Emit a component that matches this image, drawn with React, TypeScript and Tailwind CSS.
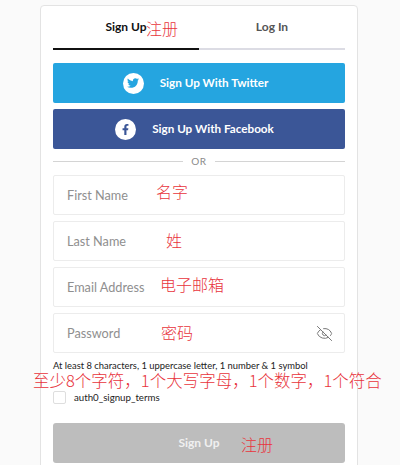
import React from "react";
import { EyeOff } from "lucide-react";
import { FaTwitter, FaFacebookF } from "react-icons/fa";

const cjk = "font-['Noto_Sans_CJK_SC',sans-serif] font-light text-[#e8343c]";

const Field = ({ label, note, noteClass, children }: { label: string; note: string; noteClass: string; children?: React.ReactNode }) => (
  <div className="relative flex h-10 items-center rounded-[2px] border border-[#ececec] bg-white pl-[13px] pt-[2px] text-[12.7px] text-[#8f8f8f]">
    {label}
    <span className={`absolute text-[16px] leading-6 ${cjk} ${noteClass}`}>{note}</span>
    {children}
  </div>
);

const App = () => {
  return (
    <div className="h-[465px] w-[400px] overflow-hidden bg-[#fafafa] pl-[40px] pt-[5px] font-['Lato',sans-serif]">
      <div className="h-[470px] w-[318px] rounded-t-[4px] border border-[#e3e3e3] bg-white px-[12px]">
        <div className="flex h-[44px]">
          <div className="relative flex w-[146px] items-center justify-center border-b-2 border-[#111] text-[12px] font-bold text-[#111]">
            Sign Up
            <span className={`absolute left-[93px] top-[12px] text-[16px] leading-5 ${cjk}`}>注册</span>
          </div>
          <div className="flex flex-1 items-center justify-center border-b-2 border-[#dcdce4] text-[12px] font-bold text-[#555]">
            Log In
          </div>
        </div>

        <button className="mt-[13px] flex h-10 w-full items-center justify-center gap-[16px] rounded-[2px] bg-[#25a5e0] pr-[7px] text-[11.7px] font-bold text-white">
          <span className="flex h-[21px] w-[21px] items-center justify-center rounded-full bg-white text-[#25a5e0]">
            <FaTwitter size={12} />
          </span>
          Sign Up With Twitter
        </button>
        <button className="mt-[6px] flex h-10 w-full items-center justify-center gap-[16px] rounded-[2px] bg-[#3b5697] pr-[9px] text-[11.7px] font-bold text-white">
          <span className="flex h-[21px] w-[21px] items-center justify-center rounded-full bg-white text-[#3b5697]">
            <FaFacebookF size={11} />
          </span>
          Sign Up With Facebook
        </button>

        <div className="mt-[5px] flex h-[14px] items-center gap-[8px] text-[10px] tracking-[0.5px] text-[#8a8a8a]">
          <div className="h-px flex-1 bg-[#d4d4d4]" />
          OR
          <div className="h-px flex-1 bg-[#d4d4d4]" />
        </div>

        <div className="mt-[7px] flex flex-col gap-[6px]">
          <Field label="First Name" note="名字" noteClass="left-[102px] top-[3px]" />
          <Field label="Last Name" note="姓" noteClass="left-[112px] top-[6px]" />
          <Field label="Email Address" note="电子邮箱" noteClass="left-[106px] top-[4px]" />
          <Field label="Password" note="密码" noteClass="left-[107px] top-[6px]">
            <EyeOff size={17} strokeWidth={1.4} className="absolute right-[11px] top-[11px] text-[#777]" />
          </Field>
        </div>

        <p className="mt-[7px] text-[9.4px] leading-[12px] text-[#222]">
          At least 8 characters, 1 uppercase letter, 1 number &amp; 1 symbol
        </p>
        <p className={`-ml-[20px] w-[360px] whitespace-nowrap text-[16.5px] leading-[16px] ${cjk}`}>
          至少8个字符，1个大写字母，1个数字，1个符合
        </p>

        <div className="mt-[1px] flex items-center gap-[8px] text-[9.7px] leading-[16px] text-[#222]">
          <span className="h-[13px] w-[13px] rounded-[2px] border border-[#dedede] bg-white" />
          auth0_signup_terms
        </div>

        <button className="relative mt-[18px] flex h-10 w-full items-center justify-center rounded-[3px] bg-[#bdbdbd] text-[12px] font-bold text-[#f0f0f0]">
          Sign Up
          <span className={`absolute left-[188px] top-[9px] text-[16px] leading-6 ${cjk}`}>注册</span>
        </button>
      </div>
    </div>
  );
};

export default App;
